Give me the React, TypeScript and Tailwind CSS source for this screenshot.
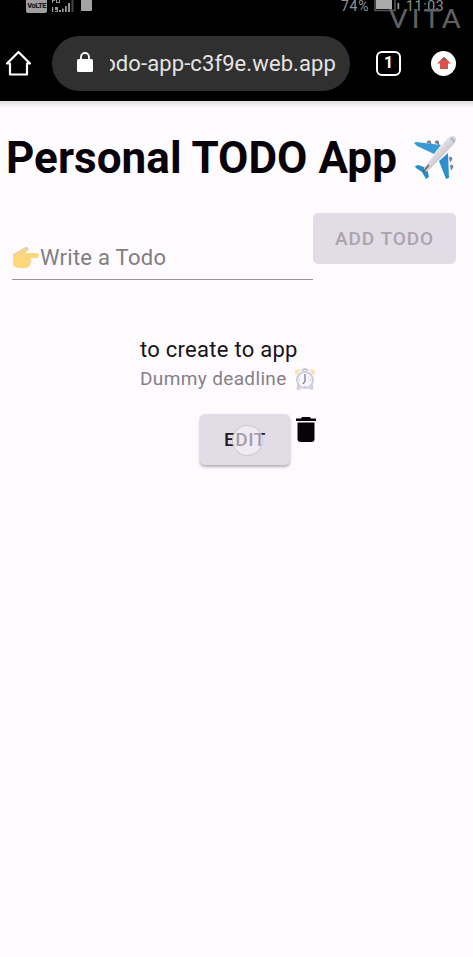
import React from "react";

function StatusBar() {
  return (
    <div className="flex h-[35px] items-start overflow-hidden pl-[26px] text-[#929292]">
      <div className="flex h-[13px] w-[21px] items-center justify-center rounded-b-[2px] bg-[#a0a0a0] pb-px text-[7.500px] font-black leading-none tracking-[-0.5px] text-[#222]">
        VoLTE
      </div>
      <svg className="ml-[4px] h-[14px] w-[23px]" viewBox="0 0 23 14" fill="#959595">
        <path d="M1 0h3v1H2v2H1zM5 0h1v3H5zM6 2h2v1H6zM8 0h1v3H8zM1 7h1.3v5H1zM4 7h3v5H4v-1h2v-1H4zM8 10h2v2H8zM11 8.500h1.700V12H11zM14 6h1.800v6H14zM17 3h2v9h-2z" />
        <path d="M20.500 0h2v12h-2z" fill="#444" />
      </svg>
      <div className="ml-[7px] h-[11px] w-[11px] rounded-b-[1px] bg-[#a3a3a3]" />
      <span className="-mt-[2px] ml-[249px] w-[35px] text-[14px] leading-[16px] tracking-[0.7px]">74%</span>
      <svg className="-ml-[2px] h-[12px] w-[27px]" viewBox="0 0 27 12" fill="none">
        <path d="M1 0v10.500h20V0" stroke="#555" strokeWidth="1.500" />
        <path d="M2 0h16v9H2z" fill="#aaa" />
        <path d="M23.500 3h1.700v6h-1.700z" fill="#999" />
      </svg>
      <span className="-mt-[2px] ml-[5px] text-[14px] leading-[16px] tracking-[0.7px]">11:03</span>
    </div>
  );
}

function BrowserBar() {
  return (
    <div className="flex h-[56px] items-center pl-[5px]">
      <svg className="h-[28px] w-[27px]" viewBox="0 0 27 28" fill="none" stroke="#fff" strokeWidth="2.200" strokeLinejoin="round" strokeLinecap="round">
        <path d="M2 14.500 13.500 3 25 14.500H22V25.500H5V14.500Z" />
      </svg>
      <div className="ml-[20px] flex h-[55px] w-[298px] items-center rounded-full bg-[#303030] pl-[25px]">
        <svg className="-mt-[2px] h-[20px] w-[16px]" viewBox="0 0 16 20">
          <path d="M4 8V5a4 4 0 0 1 8 0v3" fill="none" stroke="#fff" strokeWidth="1.800" />
          <rect y="7" width="16" height="13" rx="1.500" fill="#fff" />
        </svg>
        <div className="ml-[17px] mt-[2px] flex w-[226px] justify-end overflow-hidden whitespace-nowrap text-[22px] leading-[30px] tracking-[0.1px] text-[#e4e4e4]">
          <span>odo-app-c3f9e.web.app</span>
        </div>
      </div>
      <div className="ml-[26px] flex h-[25px] w-[25px] items-center justify-center rounded-[6px] border-[2.500px] border-white text-[16px] font-bold text-white">
        1
      </div>
      <div className="ml-[30px] flex h-[25px] w-[25px] items-center justify-center rounded-full bg-white">
        <svg className="h-[12px] w-[14px]" viewBox="0 0 14 12">
          <path d="M7 0 14 6.500H11V12H3V6.500H0Z" fill="#dc514b" />
          <path d="M7 0 10.500 3.200h-7Z" fill="#a8504c" />
        </svg>
      </div>
    </div>
  );
}

function Airplane() {
  return (
    <svg className="ml-[15px] h-[46px] w-[46px]" viewBox="0 0 46 46">
      <defs>
        <linearGradient id="fuselage" x1="0" y1="0" x2="1" y2="1">
          <stop offset=".3" stopColor="#f2eef4" />
          <stop offset=".7" stopColor="#bdb8c2" />
        </linearGradient>
      </defs>
      <path d="m15 8 1-2 2 0 1 3m4-1 1-2 2 0 1 4M37 23l2-1 1 2-2 3m0 4 2-1 1 2-2 3" fill="#6f8494" stroke="#71808d" />
      <path d="m2 8 2-1 25 3-7 9L5 11Z" fill="#399bd3" />
      <path d="m36 18 1 25-3 1-7-18Z" fill="#2b8fce" />
      <path d="m3 31 3-1 9 3 2 9-3 2-4-7-6-4Z" fill="#278fc4" />
      <path d="M13 36c-2-2-1-4 2-7L33 6c5-5 8-6 10-4s1 5-4 10L19 33c-3 3-5 4-6 3Z" fill="url(#fuselage)" />
      <path d="m38 3 2-1 3 4-1 2Z" fill="#9bc0cd" />
      <path d="m11 37 6-7" stroke="#685c66" strokeWidth="1.500" />
    </svg>
  );
}

function PointingHand() {
  return (
    <svg className="h-[22px] w-[27px]" viewBox="0 0 27 22">
      <path d="M1 8 8 4 13 1q4-1 3 2l-3 3h11q3 0 3 2.200T24 11h-6q3 3 0 5 1 3-2 4-2 2-8 1-5 0-7-3Z" fill="#ffd77c" />
      <path d="m1 8 7-4 5-3q3-1 3 1L9 8" fill="none" stroke="#e9cba0" strokeWidth="1.300" />
      <path d="M13 11h5M13 16h4" stroke="#f7ce70" strokeWidth="1" />
    </svg>
  );
}

function AlarmClock() {
  return (
    <svg className="ml-[7px] h-[22px] w-[22px]" viewBox="0 0 22 22">
      <path d="M1 6C0 2 4 0 7 2L3 7ZM21 6c1-4-3-6-6-4l4 5Z" fill="#f5e5b5" />
      <path d="M8 3q3-4 6 0" fill="none" stroke="#c7c4d2" strokeWidth="1.800" />
      <path d="m4 16-1 5h4m11-5 1 5h-4" fill="#d8d5e0" stroke="#c9c6d3" />
      <circle cx="11" cy="12" r="8" fill="#f8f6ff" stroke="#cfccdb" strokeWidth="2" />
      <path d="m11 6 0 7-2 3" fill="none" stroke="#777383" strokeWidth="1.200" />
      <path d="M5 12h1m10 0h1M11 18v1" stroke="#aaa6b4" />
    </svg>
  );
}

export default function App() {
  return (
    <div className="relative h-[957px] w-[473px] overflow-hidden bg-[#fefbff] font-['Roboto',sans-serif]">
      <header className="h-[101px] bg-black">
        <StatusBar />
        <BrowserBar />
      </header>
      <span className="pointer-events-none absolute left-[389px] top-[3px] font-['Lato',sans-serif] text-[27px] font-medium leading-[30px] tracking-[4.300px] text-[#606060]">
        VITA
      </span>
      <div className="h-[7px] bg-gradient-to-b from-[#dedce0] to-[#fefbff]" />
      <main>
        <div className="flex h-[100px] items-center pl-[6px]">
          <h1 className="whitespace-nowrap text-[44px] font-bold leading-[52px] tracking-[0.04px] text-[#08030a]">Personal TODO App</h1>
          <Airplane />
        </div>
        <form className="flex h-[72px] items-start pl-[12px] pt-[5px]" onSubmit={(e) => e.preventDefault()}>
          <label className="flex h-[67px] w-[301px] items-end border-b border-[#99949b] pb-[8px] text-[22px] tracking-[0.27px] text-[#817d84]">
            <span className="mb-[2px]"><PointingHand /></span>
            <span className="ml-px leading-[26px]">Write a Todo</span>
          </label>
          <button disabled className="h-[51px] w-[143px] rounded-[5px] bg-[#e2dce6] pt-px text-[19px] font-medium tracking-[0.95px] text-[#aaa4ae]">ADD TODO</button>
        </form>
        <section className="pl-[140px] pt-[54px]">
          <div className="h-[30px] pt-px text-[22px] leading-[30px] tracking-[0.27px] text-[#17131a]">to create to app</div>
          <div className="flex h-[30px] items-center text-[19px] tracking-[0.36px] text-[#858088]">
            <span>Dummy deadline</span>
            <AlarmClock />
          </div>
          <div className="flex items-start pl-[60px] pt-[20px]">
            <button className="relative h-[51px] w-[90px] rounded-[5px] bg-[#e2dce6] pt-px text-[19px] font-medium tracking-[0.5px] text-[#201b23] shadow-[0_2px_3px_rgba(0,0,0,0.3)]">
              EDIT
              <span className="absolute left-[32px] top-[11px] h-[31px] w-[31px] rounded-full border border-[#c5bfcc]/80 bg-[#f8f4fc]/60" />
            </button>
            <svg className="ml-[6px] mt-[3px] h-[25px] w-[20px]" viewBox="0 0 20 25">
              <path d="M6 0h8l1 1.500h5V4H0V1.500h5ZM1.500 5.500h17V22q0 3-3 3h-11q-3 0-3-3Z" fill="#080309" />
            </svg>
          </div>
        </section>
      </main>
    </div>
  );
}
